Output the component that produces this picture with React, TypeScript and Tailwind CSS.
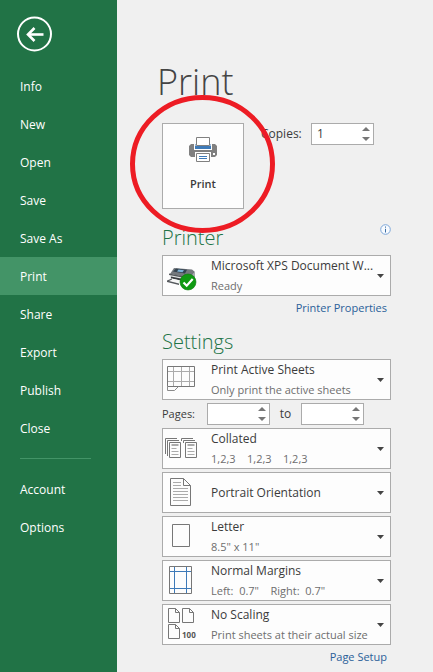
import React from 'react';

const NAV_ITEMS = ['Info', 'New', 'Open', 'Save', 'Save As', 'Print', 'Share', 'Export', 'Publish', 'Close'];
const FOOTER_ITEMS = ['Account', 'Options'];

const NavItem = ({ label, active = false }: { label: string; active?: boolean }) => (
  <li>
    <a
      href="#"
      aria-current={active ? 'page' : undefined}
      className={
        active
          ? 'flex h-[38px] items-center bg-[#439467] pt-0.5 pl-5 text-white'
          : 'flex h-[38px] items-center pt-0.5 pl-5 text-white hover:bg-[#439467]'
      }
    >
      {label}
    </a>
  </li>
);

const Sidebar = () => (
  <nav className="w-[117px] shrink-0 bg-[#217346]">
    <button type="button" aria-label="Back" className="mt-4 ml-4 block">
      <svg width="36" height="36" viewBox="0 0 36 36" fill="none" stroke="white">
        <circle cx="18.5" cy="18" r="16.5" strokeWidth="2" />
        <path d="M27.5 18.5H12" strokeWidth="2.6" />
        <path d="M18.5 12l-6.5 6.5 6.5 6.5" strokeWidth="2.6" />
      </svg>
    </button>
    <ul className="mt-[15px]">
      {NAV_ITEMS.map((item) => (
        <NavItem key={item} label={item} active={item === 'Print'} />
      ))}
    </ul>
    <hr className="mt-[11px] mr-[26px] mb-[11px] ml-5 border-[#439467]" />
    <ul>
      {FOOTER_ITEMS.map((item) => (
        <NavItem key={item} label={item} />
      ))}
    </ul>
  </nav>
);

const NumberBox = ({ id, value = '' }: { id: string; value?: string }) => (
  <div className="flex h-[22px] w-[63px] border border-[#ababab] bg-white">
    <input
      id={id}
      type="text"
      inputMode="numeric"
      defaultValue={value}
      className="min-w-0 flex-1 pl-[5px] outline-none"
    />
    <div className="flex w-[15px] flex-col">
      <button type="button" aria-label="Increase" className="flex h-[10px] items-center justify-center">
        <svg width="8" height="4" viewBox="0 0 8 4" fill="#777">
          <path d="M0 4L4 0l4 4z" />
        </svg>
      </button>
      <button type="button" aria-label="Decrease" className="flex h-[10px] items-center justify-center">
        <svg width="8" height="4" viewBox="0 0 8 4" fill="#777">
          <path d="M0 0h8L4 4z" />
        </svg>
      </button>
    </div>
  </div>
);

const IconFrame = ({ children }: { children: React.ReactNode }) => (
  <svg width="48" height="39" viewBox="0 0 48 39" fill="none" stroke="#777" className="shrink-0" aria-hidden="true">
    {children}
  </svg>
);

const DeviceIcon = () => (
  <IconFrame>
    <g stroke="none">
      <path d="M11 12l18 1.500 3 2.500-5 6-20-4z" fill="#74797e" />
      <path d="M13 12.500l11 1.300-2 3.700-12-2z" fill="#34424f" />
      <path d="M15.500 13.500l5.500.8-1.500 2-5.500-.8z" fill="#7db4d8" />
      <path d="M7 18l20 4v6L9 25l-2-2z" fill="#e4e6e8" />
      <path d="M6 17.500l21 4v1.500L6 19z" fill="#55595d" />
      <path d="M27 22l5-6v6l-5 5z" fill="#a4a8ac" />
      <path d="M8 20.500l11 2.200v2L8 22.500z" fill="#3a3d40" />
      <path d="M4 24.500l5-2 10 2.500-4 3.500z" fill="#f7f7f7" />
      <path d="M4 24.500l5-2v1l-3 1.500 10 2.500v1.500l-12-3z" fill="#55595d" />
    </g>
    <circle cx="25" cy="26" r="8" fill="#0f9a12" stroke="#0b7a0b" strokeWidth=".6" />
    <path d="M20.500 26.500l3.200 3.200 6-6.700" stroke="white" strokeWidth="2.200" />
  </IconFrame>
);

const SheetsIcon = () => (
  <IconFrame>
    <path d="M10.500 7v19M18.500 7v19M26.500 7v19M5 11.500h26M5 21.500h26" stroke="#ababab" />
    <path d="M4.500 6.500h27v20h-27z" />
    <path d="M4.500 26.500v4h7l4-4" stroke="#8a8a8a" />
  </IconFrame>
);

const CollatedIcon = () => (
  <IconFrame>
    <path d="M2.500 25V9.500H14M4.500 27V11.500H16M18.500 12V9.500H30M20.500 14V11.500H32" />
    <path d="M6.500 13.500h11v15h-11zM22.500 13.500h11v15h-11z" />
    <path d="M8.500 16h7M24.500 16h7" stroke="#ababab" strokeWidth="2" />
    <path d="M8.500 19.500h5M8.500 22.500h7M8.500 25.500h7M24.500 19.500h5M24.500 22.500h7M24.500 25.500h7" stroke="#ababab" />
  </IconFrame>
);

const PortraitIcon = () => (
  <IconFrame>
    <path d="M7.500 5.500h13l7 7v20h-20zM20.500 5.500v7h7" />
    <path
      d="M10 9.500h8M10 12.500h8M10 15.500h15M10 18.500h15M10 21.500h15M10 24.500h15M10 27.500h15"
      stroke="#ababab"
    />
  </IconFrame>
);

const LetterIcon = () => (
  <IconFrame>
    <path d="M9.500 7.500h17v22h-17z" />
  </IconFrame>
);

const MarginsIcon = () => (
  <IconFrame>
    <path d="M11.500 6v26M23.500 6v26M7 10.500h21M7 27.500h21" stroke="#3e7ab8" />
    <path d="M6.500 5.500h22v27h-22z" />
  </IconFrame>
);

const ScalingIcon = () => (
  <IconFrame>
    <path d="M5.500 3.500h7l4 4v10h-11zM12.500 3.500v4h4" />
    <path d="M19.500 3.500h7l4 4v10h-11zM26.500 3.500v4h4" />
    <path d="M5.500 19.500h7l4 4v10h-11zM12.500 19.500v4h4" />
    <text x="19" y="33" fontSize="8" fontWeight="700" fill="#555" stroke="none">
      100
    </text>
  </IconFrame>
);

type PickerProps = {
  label: string;
  value: string;
  detail?: string;
  icon: React.ReactNode;
};

const Picker = ({ label, value, detail, icon }: PickerProps) => (
  <div className="flex h-[41px] items-center border border-[#ababab] bg-[#fdfdfd]">
    {icon}
    <div className="flex min-w-0 flex-1 flex-col">
      <select aria-label={label} className="h-5 w-full appearance-none bg-transparent leading-5 outline-none">
        <option>{value}</option>
      </select>
      {detail && <span className="h-5 text-[11px] leading-5 whitespace-pre text-[#6e6e6e]">{detail}</span>}
    </div>
    <svg width="7" height="4" viewBox="0 0 7 4" fill="#444" className="mr-[6px] shrink-0" aria-hidden="true">
      <path d="M0 0h7L3.500 4z" />
    </svg>
  </div>
);

const PrintButton = () => (
  <div className="relative">
    <button
      type="button"
      className="flex h-[86px] w-[82px] flex-col items-center border border-[#ababab] bg-[#fdfdfd] pt-[13px] text-[11px] font-semibold"
    >
      <svg width="28" height="26" viewBox="0 0 28 26" aria-hidden="true">
        <path d="M2 7h24l2 2v9l-2 2H2l-2-2V9z" fill="#808080" />
        <path d="M5 6h18v7H5z" fill="#fdfdfd" />
        <path d="M6 7h16v5H6z" fill="#3e7ab8" />
        <path d="M6.500 0h15v9h-15z" fill="#fdfdfd" />
        <path d="M7.500 .5h13v8h-13z" fill="white" stroke="#808080" />
        <path d="M6 15h16v10H6z" fill="#fdfdfd" />
        <path d="M7.500 16.500h13v8h-13z" fill="white" stroke="#808080" />
        <path d="M10 19.500h8M10 21.500h8" stroke="#3e7ab8" />
        <path d="M24 16h2v2h-2z" fill="white" />
      </svg>
      <span className="mt-[13px] leading-4">Print</span>
    </button>
    {/* Highlight ring */}
    <svg
      width="145"
      height="138"
      viewBox="0 0 145 138"
      fill="none"
      className="pointer-events-none absolute -top-7 -left-8 z-10 max-w-none"
      aria-hidden="true"
    >
      <ellipse cx="72.500" cy="69" rx="70" ry="66.500" stroke="#ed1c24" strokeWidth="5" />
    </svg>
  </div>
);

const App = () => {
  return (
    <div className="flex min-h-screen bg-[#f0f0f0] font-['Open_Sans',sans-serif] text-[12px] text-[#3b3b3b]">
      <Sidebar />
      <main className="min-w-0 flex-1 pr-[42px]">
        <h1 className="pt-[62px] pl-10 text-[36px] leading-10 font-light text-[#444]">Print</h1>

        <div className="pt-[21px] pl-[45px]">
          <div className="flex">
            <PrintButton />
            <div className="ml-[17px] flex h-[22px] items-center">
              <label htmlFor="copies" className="w-[50px]">
                Copies:
              </label>
              <NumberBox id="copies" value="1" />
            </div>
          </div>

          {/* Printer */}
          <div className="mt-3 flex h-[34px] justify-between">
            <h2 className="text-[20px] leading-[34px] font-light text-[#217346]">Printer</h2>
            <button type="button" aria-label="Printer status" className="h-[17px]">
              <svg width="11" height="11" viewBox="0 0 11 11" fill="none" stroke="#7da7d9">
                <circle cx="5.500" cy="5.500" r="4.800" fill="#f8fbff" />
                <path d="M5.500 4.800V8.500M5.500 2.500v1.200" stroke="#3a6ea5" />
              </svg>
            </button>
          </div>
          <Picker label="Printer" value="Microsoft XPS Document W..." detail="Ready" icon={<DeviceIcon />} />
          <div className="flex h-6 items-center justify-end pr-1">
            <a href="#" className="text-[11px] text-[#2a6099]">
              Printer Properties
            </a>
          </div>

          {/* Settings */}
          <h2 className="mt-[5px] text-[20px] leading-[34px] font-light text-[#217346]">Settings</h2>
          <div className="flex flex-col gap-[3px]">
            <Picker
              label="Print area"
              value="Print Active Sheets"
              detail="Only print the active sheets"
              icon={<SheetsIcon />}
            />
            <div className="flex items-center">
              <label htmlFor="page-from" className="w-[45px] text-[11px]">
                Pages:
              </label>
              <NumberBox id="page-from" />
              <label htmlFor="page-to" className="w-[31px] text-center">
                to
              </label>
              <NumberBox id="page-to" />
            </div>
            <Picker label="Collation" value="Collated" detail="1,2,3    1,2,3    1,2,3" icon={<CollatedIcon />} />
            <Picker label="Orientation" value="Portrait Orientation" icon={<PortraitIcon />} />
            <Picker label="Paper size" value="Letter" detail={'8.5" x 11"'} icon={<LetterIcon />} />
            <Picker
              label="Margins"
              value="Normal Margins"
              detail={'Left:  0.7"    Right:  0.7"'}
              icon={<MarginsIcon />}
            />
            <Picker
              label="Scaling"
              value="No Scaling"
              detail="Print sheets at their actual size"
              icon={<ScalingIcon />}
            />
          </div>
          <div className="flex h-6 items-center justify-end pr-1">
            <a href="#" className="text-[11px] text-[#2a6099]">
              Page Setup
            </a>
          </div>
        </div>
      </main>
    </div>
  );
};

export default App;
